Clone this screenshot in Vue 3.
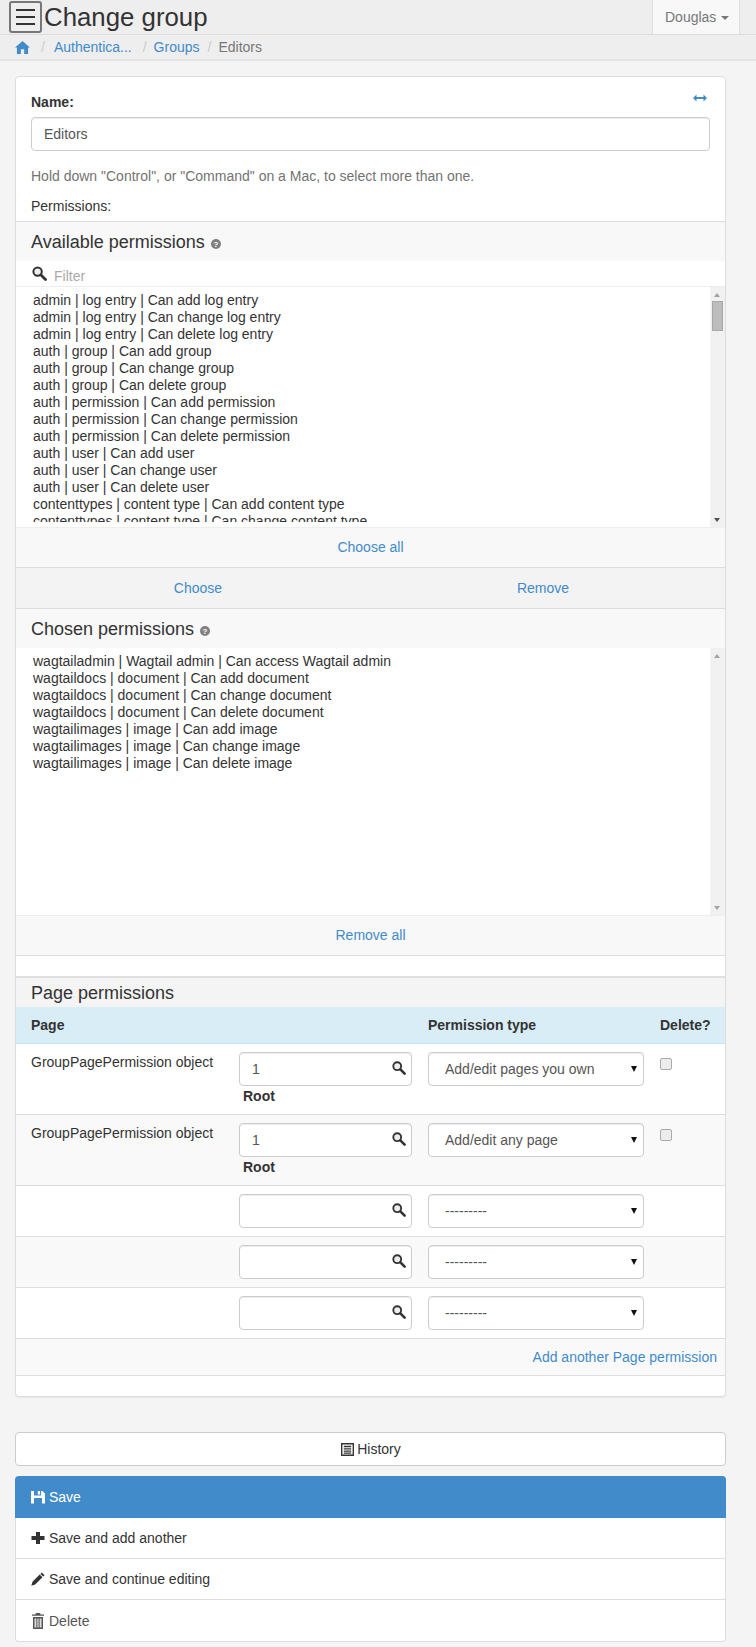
<script setup>
const available = [
  'admin | log entry | Can add log entry',
  'admin | log entry | Can change log entry',
  'admin | log entry | Can delete log entry',
  'auth | group | Can add group',
  'auth | group | Can change group',
  'auth | group | Can delete group',
  'auth | permission | Can add permission',
  'auth | permission | Can change permission',
  'auth | permission | Can delete permission',
  'auth | user | Can add user',
  'auth | user | Can change user',
  'auth | user | Can delete user',
  'contenttypes | content type | Can add content type',
  'contenttypes | content type | Can change content type',
]
const chosen = [
  'wagtailadmin | Wagtail admin | Can access Wagtail admin',
  'wagtaildocs | document | Can add document',
  'wagtaildocs | document | Can change document',
  'wagtaildocs | document | Can delete document',
  'wagtailimages | image | Can add image',
  'wagtailimages | image | Can change image',
  'wagtailimages | image | Can delete image',
]
const rows = [
  { name: 'GroupPagePermission object', page: '1', root: true, type: 'Add/edit pages you own', del: true },
  { name: 'GroupPagePermission object', page: '1', root: true, type: 'Add/edit any page', del: true },
  { name: '', page: '', root: false, type: '---------', del: false },
  { name: '', page: '', root: false, type: '---------', del: false },
  { name: '', page: '', root: false, type: '---------', del: false },
]
</script>

<template>
  <div class="page">
    <header class="topbar">
      <button class="burger"><span></span><span></span><span></span></button>
      <h1>Change group</h1>
      <div class="user">Douglas <i class="caret"></i></div>
    </header>

    <nav class="crumbs">
      <svg class="home" viewBox="0 0 16 14" width="15" height="13">
        <path fill="#428bca" d="M8 0 L16 7 L14 7 L14 14 L9.8 14 L9.8 9 L6.2 9 L6.2 14 L2 14 L2 7 L0 7 Z" />
      </svg>
      <span class="sep s1">/</span>
      <a>Authentica...</a>
      <span class="sep s2">/</span>
      <a>Groups</a>
      <span class="sep s3">/</span>
      <span class="current">Editors</span>
    </nav>

    <main class="content">
      <section class="card">
        <div class="basic">
          <div class="name-row">
            <label>Name:</label>
            <svg viewBox="0 0 14 8" width="14" height="8">
              <path fill="#428bca" d="M0 4 L3.5 0.6 L3.5 3 L10.5 3 L10.5 0.6 L14 4 L10.5 7.4 L10.5 5 L3.5 5 L3.5 7.4 Z" />
            </svg>
          </div>
          <div class="field">Editors</div>
          <p class="help">Hold down "Control", or "Command" on a Mac, to select more than one.</p>
          <p class="perm-label">Permissions:</p>
        </div>

        <div class="pane-head first-head">
          Available permissions
          <svg class="q" viewBox="0 0 10 10" width="10" height="10">
            <circle cx="5" cy="5" r="5" fill="#808080" />
            <text x="5" y="8" text-anchor="middle" font-size="8" font-weight="700" fill="#fff" font-family="Liberation Sans">?</text>
          </svg>
        </div>
        <div class="filter">
          <svg class="search" viewBox="0 0 15 15" width="15" height="15">
            <circle cx="5.6" cy="5.6" r="4.2" fill="#eee" stroke="#333" stroke-width="2" />
            <path d="M9 9 L13.5 13.5" stroke="#333" stroke-width="2.8" stroke-linecap="round" />
          </svg>
          <span>Filter</span>
        </div>
        <div class="list avail">
          <div class="lines-wrap">
            <div class="lines">
              <div v-for="item in available" :key="item">{{ item }}</div>
            </div>
          </div>
          <div class="scroll">
            <i class="up"></i>
            <b class="thumb"></b>
            <i class="down dark"></i>
          </div>
        </div>
        <div class="all-row"><a>Choose all</a></div>

        <div class="move-row">
          <a>Choose</a>
          <a>Remove</a>
        </div>

        <div class="pane-head">
          Chosen permissions
          <svg class="q" viewBox="0 0 10 10" width="10" height="10">
            <circle cx="5" cy="5" r="5" fill="#808080" />
            <text x="5" y="8" text-anchor="middle" font-size="8" font-weight="700" fill="#fff" font-family="Liberation Sans">?</text>
          </svg>
        </div>
        <div class="list picked">
          <div class="lines-wrap">
            <div class="lines">
              <div v-for="item in chosen" :key="item">{{ item }}</div>
            </div>
          </div>
          <div class="scroll">
            <i class="up"></i>
            <i class="down"></i>
          </div>
        </div>
        <div class="all-row remove-all"><a>Remove all</a></div>
        <div class="spacer"></div>

        <h2 class="inline-title">Page permissions</h2>
        <div class="grid grid-head">
          <span>Page</span>
          <span></span>
          <span>Permission type</span>
          <span>Delete?</span>
        </div>
        <div v-for="(row, i) in rows" :key="i" class="grid grid-row" :class="{ odd: i % 2 === 1 }">
          <span class="obj">{{ row.name }}</span>
          <div>
            <div class="lookup">
              <span>{{ row.page }}</span>
              <svg viewBox="0 0 15 15" width="14" height="14">
                <circle cx="5.6" cy="5.6" r="4.2" fill="#eee" stroke="#333" stroke-width="2" />
                <path d="M9 9 L13.5 13.5" stroke="#333" stroke-width="2.8" stroke-linecap="round" />
              </svg>
            </div>
            <strong v-if="row.root" class="root">Root</strong>
          </div>
          <div class="pick">
            <span>{{ row.type }}</span>
            <i class="tri"></i>
          </div>
          <div><input v-if="row.del" class="check" type="checkbox" /></div>
        </div>
        <div class="add-row"><a>Add another Page permission</a></div>
        <div class="tail"></div>
      </section>

      <div class="history">
        <svg viewBox="0 0 14 14" width="13" height="13">
          <path fill="#333" fill-rule="evenodd" d="M0 0 H14 V14 H0 Z M1.5 1.5 V12.5 H12.5 V1.5 Z M3 3 H11 V4.5 H3 Z M3 5.6 H11 V7 H3 Z M3 8 H11 V9.4 H3 Z M3 10.3 H11 V11.6 H3 Z" />
        </svg>
        History
      </div>

      <div class="actions">
        <div class="act primary">
          <svg viewBox="0 0 14 14" width="14" height="14">
            <path fill="#fff" fill-rule="evenodd" d="M0 1 H3 V5.5 H10 V1 H11.5 L14 3.5 V13.5 H0 Z M3 8 V13.5 H11 V8 Z M6.8 1 H9 V4.5 H6.8 Z" />
          </svg>
          Save
        </div>
        <div class="act">
          <svg viewBox="0 0 14 14" width="14" height="14">
            <path fill="#333" d="M5 1 H9 V5 H13.5 V9 H9 V13 H5 V9 H0.5 V5 H5 Z" />
          </svg>
          Save and add another
        </div>
        <div class="act">
          <svg viewBox="0 0 14 14" width="14" height="14">
            <path fill="#333" d="M10.8 0.5 L13.6 3.2 L12.2 4.6 L9.4 1.9 Z M8.7 2.6 L11.5 5.3 L4.2 12.4 L0.3 13.7 L1.5 9.8 Z" />
          </svg>
          Save and continue editing
        </div>
        <div class="act muted">
          <svg viewBox="0 0 14 16" width="14" height="16">
            <path fill="#555" fill-rule="evenodd" d="M5 0 H9 L9.6 1.4 H13 V2.8 H1 V1.4 H4.4 Z M2 4 H12 V16 H2 Z M3.6 5.4 V14.6 H4.8 V5.4 Z M5.7 5.4 V14.6 H6.5 V5.4 Z M7.5 5.4 V14.6 H8.3 V5.4 Z M9.2 5.4 V14.6 H10.4 V5.4 Z" />
          </svg>
          Delete
        </div>
      </div>
    </main>
  </div>
</template>

<style>
body {
  background: #f4f4f4;
}
</style>

<style scoped>
.page {
  width: 756px;
  height: 1647px;
  overflow: hidden;
  background: #f4f4f4;
  color: #333;
  font-family: "Liberation Sans", Arial, sans-serif;
  font-size: 14px;
  line-height: 20px;
}

a {
  color: #428bca;
}

.topbar {
  display: flex;
  align-items: flex-start;
  height: 35px;
  box-sizing: border-box;
  background: #eee;
  border-bottom: 1px solid #ddd;
}

.burger {
  display: flex;
  flex-direction: column;
  justify-content: center;
  gap: 5px;
  width: 33px;
  height: 32px;
  margin: 1px 2px 0 9px;
  padding: 0 5px;
  background: transparent;
  border: 2px solid #777;
  border-radius: 3px;
}

.burger span {
  display: block;
  height: 2px;
  background: #333;
}

h1 {
  margin: 0;
  font-size: 25.8px;
  font-weight: 400;
  line-height: 34px;
}

.user {
  margin-left: auto;
  margin-right: 16px;
  width: 88px;
  height: 34px;
  box-sizing: border-box;
  padding-left: 12px;
  line-height: 34px;
  color: #777;
  background: #f8f8f8;
  border-left: 1px solid #ddd;
  border-right: 1px solid #ddd;
}

.caret {
  display: inline-block;
  margin-left: 1px;
  vertical-align: middle;
  border-top: 4px solid #777;
  border-left: 4px solid transparent;
  border-right: 4px solid transparent;
}

.crumbs {
  display: flex;
  align-items: center;
  height: 26px;
  box-sizing: border-box;
  padding-left: 15px;
  background: #eee;
  border-bottom: 2px solid #e3e3e3;
}

.crumbs .sep {
  color: #ccc;
}

.crumbs .s1 {
  margin: 0 9px 0 11px;
}

.crumbs .s2 {
  margin: 0 7px 0 11px;
}

.crumbs .s3 {
  margin: 0 7px 0 8px;
}

.current {
  color: #777;
}

.content {
  padding: 15px 30px 0 15px;
}

.card {
  background: #fff;
  border: 1px solid #ddd;
  border-radius: 4px;
  box-shadow: 0 1px 1px rgba(0, 0, 0, 0.05);
}

.basic {
  padding: 15px 15px 5px;
}

.name-row {
  display: flex;
  justify-content: space-between;
  align-items: flex-start;
  height: 25px;
}

.name-row label {
  font-weight: 700;
}

.name-row svg {
  margin: 2px 3px 0 0;
}

.field,
.lookup,
.pick {
  box-sizing: border-box;
  height: 34px;
  background: #fff;
  border: 1px solid #ccc;
  border-radius: 4px;
  box-shadow: inset 0 1px 1px rgba(0, 0, 0, 0.075);
  color: #555;
}

.field {
  padding: 6px 12px;
}

.help {
  margin: 15px 0 0;
  color: #737373;
}

.perm-label {
  margin: 10px 0 0;
}

.pane-head {
  height: 39px;
  padding-left: 15px;
  background: #f8f8f8;
  font-size: 18px;
  line-height: 41px;
}

.first-head {
  height: 40px;
  box-sizing: border-box;
  border-top: 1px solid #ddd;
}

.q {
  margin-left: 1px;
  vertical-align: -1px;
}

.filter {
  display: flex;
  align-items: center;
  height: 26px;
  box-sizing: border-box;
  padding-left: 16px;
  color: #aaa;
  border-bottom: 1px solid #eee;
}

.filter span {
  margin-top: 5px;
}

.search {
  margin-right: 7px;
}

.list {
  display: flex;
}

.avail {
  height: 240px;
}

.picked {
  height: 267px;
}

.lines-wrap {
  flex: 1;
  margin: 5px 0;
  overflow: hidden;
}

.lines {
  padding-left: 17px;
  line-height: 17px;
}

.scroll {
  position: relative;
  flex: none;
  width: 15px;
  background: #f1f1f1;
}

.up,
.down {
  position: absolute;
  left: 4px;
  border-left: 3.5px solid transparent;
  border-right: 3.5px solid transparent;
}

.up {
  top: 6px;
  border-bottom: 4px solid #a3a3a3;
}

.down {
  bottom: 5px;
  border-top: 4px solid #a3a3a3;
}

.down.dark {
  border-top-color: #505050;
}

.thumb {
  position: absolute;
  top: 14px;
  left: 2px;
  width: 11px;
  height: 30px;
  box-sizing: border-box;
  background: #bcbcbc;
  border: 1px solid #a8a8a8;
}

.all-row {
  height: 41px;
  box-sizing: border-box;
  line-height: 39px;
  text-align: center;
  background: #f8f8f8;
  border-top: 1px solid #eee;
  border-bottom: 1px solid #ddd;
}

.move-row {
  display: grid;
  grid-template-columns: 364px 326px;
  height: 41px;
  box-sizing: border-box;
  line-height: 40px;
  text-align: center;
  background: #f3f3f3;
  border-bottom: 1px solid #ddd;
}

.spacer {
  height: 20px;
}

.inline-title {
  margin: 0;
  height: 31px;
  box-sizing: border-box;
  padding-left: 15px;
  font-size: 18px;
  font-weight: 400;
  line-height: 31px;
  background: #f4f4f4;
  border-top: 2px solid #e0e0e0;
}

.grid {
  display: grid;
  grid-template-columns: 192px 173px 216px auto;
  column-gap: 16px;
  padding: 0 15px;
}

.grid-head {
  height: 37px;
  box-sizing: border-box;
  font-weight: 700;
  line-height: 36px;
  background: #d9edf7;
  border-bottom: 1px solid #bce8f1;
}

.grid-row {
  padding-top: 8px;
  padding-bottom: 8px;
  border-bottom: 1px solid #ddd;
}

.grid-row.odd {
  background: #f9f9f9;
}

.lookup {
  display: flex;
  align-items: center;
  justify-content: space-between;
  padding: 0 5px 0 12px;
}

.lookup svg {
  margin-top: -3px;
}

.root {
  display: block;
  height: 20px;
  padding-left: 4px;
  line-height: 20px;
}

.pick {
  display: flex;
  align-items: center;
  justify-content: space-between;
  padding: 0 6px 0 16px;
}

.tri {
  margin-top: -1px;
  border-top: 6px solid #111;
  border-left: 3px solid transparent;
  border-right: 3px solid transparent;
}

.check {
  appearance: none;
  display: block;
  width: 12px;
  height: 12px;
  margin: 6px 0 0;
  background: #ececec;
  border: 1px solid #aaa;
  border-radius: 2px;
}

.add-row {
  height: 37px;
  box-sizing: border-box;
  padding-right: 8px;
  line-height: 36px;
  text-align: right;
  background: #f9f9f9;
  border-bottom: 1px solid #ddd;
}

.tail {
  height: 20px;
}

.history {
  display: flex;
  align-items: center;
  justify-content: center;
  gap: 3px;
  height: 34px;
  box-sizing: border-box;
  margin-top: 35px;
  padding-left: 1px;
  background: #fff;
  border: 1px solid #ccc;
  border-radius: 4px;
}

.actions {
  margin-top: 10px;
  background: #fff;
  border: 1px solid #ddd;
  border-top: 0;
  border-radius: 4px;
}

.act {
  display: flex;
  align-items: center;
  gap: 4px;
  height: 41px;
  box-sizing: border-box;
  padding: 0 0 0 15px;
  border-bottom: 1px solid #ddd;
}

.act:last-child {
  border-bottom: 0;
}

.act.primary {
  height: 42px;
  margin: 0 -1px;
  padding-left: 16px;
  color: #fff;
  background: #428bca;
  border-bottom: 0;
  border-radius: 4px 4px 0 0;
}

.act.muted {
  color: #555;
}
</style>
